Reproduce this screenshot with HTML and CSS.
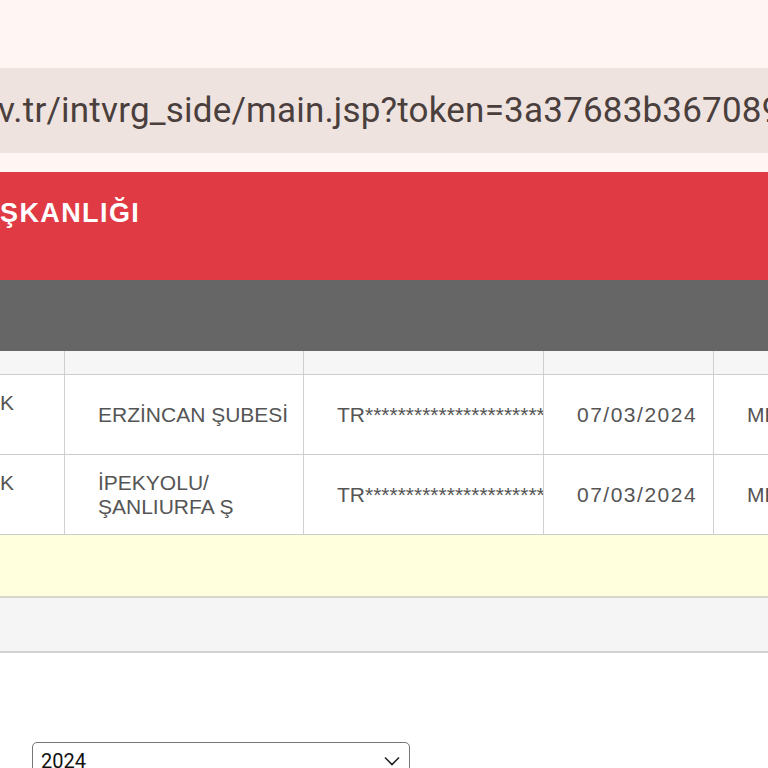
FILE: index.html
```html
<!DOCTYPE html>
<html lang="tr">
<head>
<meta charset="utf-8">
<title>intvrg</title>
<link rel="stylesheet" href="styles.css">
</head>
<body>
<div class="page">
  <div class="top-space"></div>
  <div class="urlbar"><span class="url">v.tr/intvrg_side/main.jsp?token=3a37683b367089</span></div>
  <div class="gap"></div>
  <div class="banner"><span class="banner-title">ŞKANLIĞI</span></div>
  <div class="darkbar"></div>
  <div class="table">
    <div class="row head">
      <div class="cell c1"></div>
      <div class="cell"></div>
      <div class="cell"></div>
      <div class="cell"></div>
      <div class="cell"></div>
    </div>
    <div class="row data">
      <div class="cell c1">K</div>
      <div class="cell">ERZİNCAN ŞUBESİ</div>
      <div class="cell iban">TR**********************</div>
      <div class="cell date">07/03/2024</div>
      <div class="cell">MERKEZ</div>
    </div>
    <div class="row data">
      <div class="cell c1">K</div>
      <div class="cell">İPEKYOLU/<br>ŞANLIURFA Ş</div>
      <div class="cell iban">TR**********************</div>
      <div class="cell date">07/03/2024</div>
      <div class="cell">MERKEZ</div>
    </div>
  </div>
  <div class="notice"></div>
  <div class="footer-bar"></div>
  <div class="filter">
    <div class="select">
      <span class="select-value">2024</span>
      <svg class="chev" width="16" height="10" viewBox="0 0 16 10"><path d="M1 1.5 L8 8.5 L15 1.5" fill="none" stroke="#222" stroke-width="1.6"/></svg>
    </div>
  </div>
</div>
</body>
</html>
```

FILE: styles.css
```css
html, body {
  margin: 0;
  padding: 0;
  background: #ffffff;
}
.page {
  width: 768px;
  height: 768px;
  overflow: hidden;
  font-family: "Liberation Sans", Arial, sans-serif;
}
.top-space {
  height: 68px;
  background: #fff6f4;
}
.urlbar {
  height: 85px;
  background: #efe3df;
  display: flex;
  align-items: center;
  overflow: hidden;
  white-space: nowrap;
}
.url {
  font-family: Roboto, "Noto Sans", sans-serif;
  font-size: 35px;
  color: #4a3f3d;
  margin-left: -2px;
  letter-spacing: 0.2px;
}
.gap {
  height: 19px;
  background: #fff6f4;
}
.banner {
  height: 108px;
  background: #e03a45;
  box-sizing: border-box;
  padding-top: 25px;
}
.banner-title {
  font-family: "Liberation Sans", Arial, sans-serif;
  font-weight: bold;
  font-size: 27px;
  line-height: 32px;
  color: #ffffff;
  letter-spacing: 1.4px;
}
.darkbar {
  height: 71px;
  background: #666666;
}
.table {
  width: 768px;
  overflow: hidden;
}
.row {
  display: grid;
  grid-template-columns: 65px 239px 240px 170px 1fr;
  border-bottom: 1px solid #cccccc;
}
.row.head {
  height: 24px;
  box-sizing: border-box;
  background: #f6f6f6;
}
.row.data {
  height: 80px;
  box-sizing: border-box;
  background: #ffffff;
}
.cell {
  border-right: 1px solid #d0d0d0;
  padding-left: 33px;
  overflow: hidden;
  white-space: nowrap;
  font-size: 21px;
  line-height: 24px;
  color: #555555;
  display: flex;
  align-items: center;
}
.cell:last-child {
  border-right: none;
}
.cell.c1 {
  padding-left: 0;
  align-items: flex-start;
  padding-top: 16px;
}
.row.head .cell.c1 {
  padding-top: 0;
}
.cell.date {
  letter-spacing: 1.5px;
}
.notice {
  height: 61px;
  background: #ffffdd;
  border-bottom: 2px solid #d6d6cc;
}
.footer-bar {
  height: 53px;
  background: #f5f5f5;
  border-bottom: 2px solid #d2d2d2;
}
.filter {
  padding-top: 89px;
  padding-left: 32px;
}
.select {
  width: 378px;
  height: 38px;
  box-sizing: border-box;
  border: 1px solid #767676;
  border-radius: 5px;
  display: flex;
  align-items: center;
  justify-content: space-between;
  padding: 0 9px 0 8px;
  background: #ffffff;
}
.select-value {
  font-family: Roboto, "Noto Sans", sans-serif;
  font-size: 20px;
  color: #111111;
}
.chev {
  display: block;
}
```
